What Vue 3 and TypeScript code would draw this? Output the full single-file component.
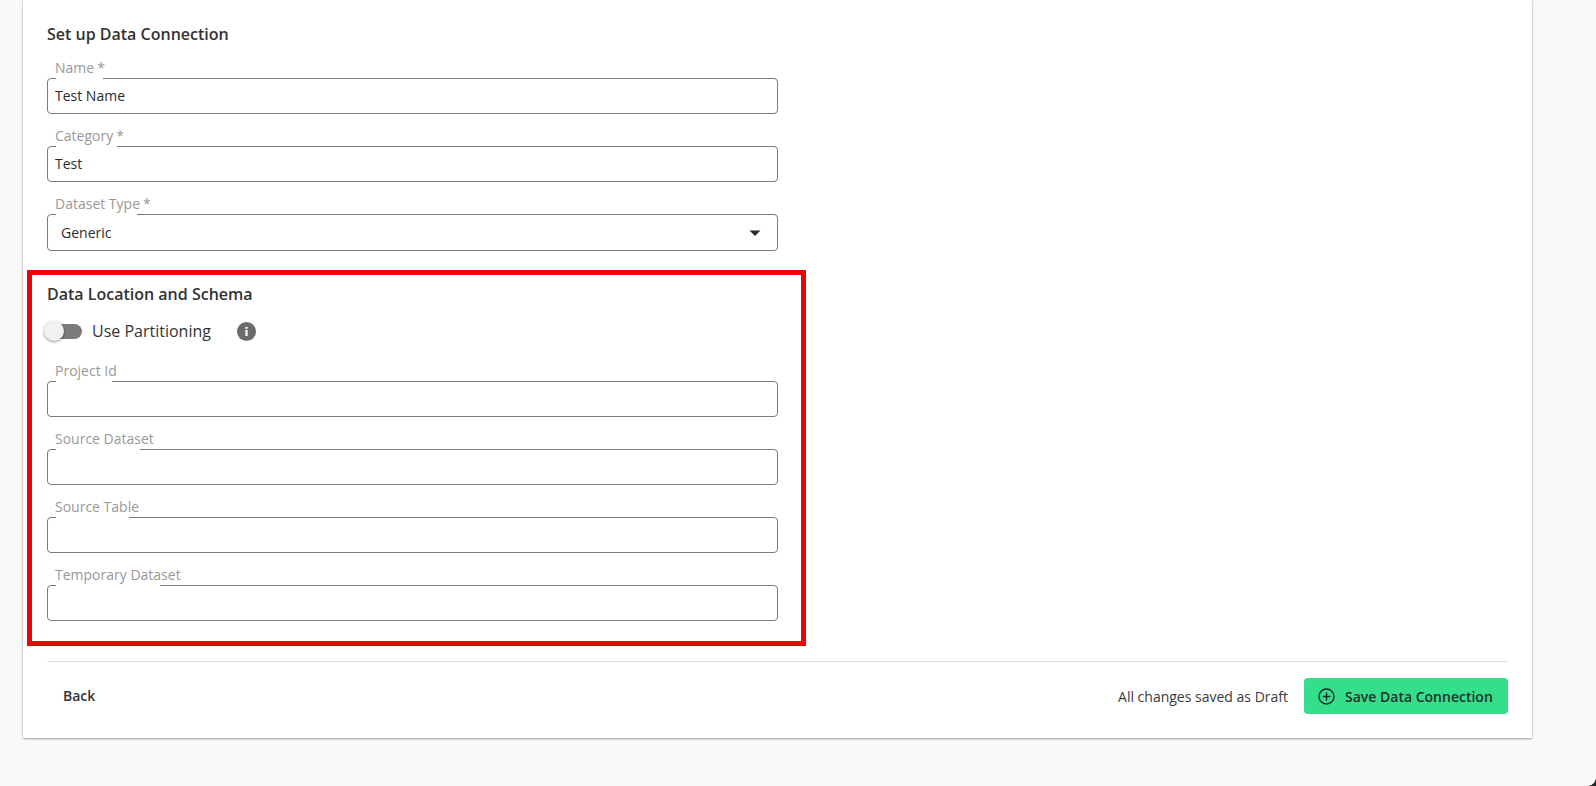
<script setup lang="ts">
interface Field { label: string; notch: number; required?: boolean; value?: string }
const topFields: Field[] = [
  { label: 'Name', notch: 47, required: true, value: 'Test Name' },
  { label: 'Category', notch: 61, required: true, value: 'Test' },
]
const locationFields: Field[] = [
  { label: 'Project Id', notch: 56 },
  { label: 'Source Dataset', notch: 84 },
  { label: 'Source Table', notch: 73 },
  { label: 'Temporary Dataset', notch: 104 },
]
</script>

<template>
  <div class="page">
    <main class="card">
      <section class="group">
        <h2 class="title">Set up Data Connection</h2>
        <div v-for="f in topFields" :key="f.label" class="field">
          <label class="label">{{ f.label }}<span class="req">*</span></label>
          <span class="notch" :style="{ width: f.notch + 'px' }"></span>
          <div class="control">{{ f.value }}</div>
        </div>
        <div class="field">
          <label class="label">Dataset Type<span class="req">*</span></label>
          <span class="notch" :style="{ width: '81px' }"></span>
          <div class="control select">
            <span>Generic</span>
            <svg class="caret" width="12" height="6" viewBox="0 0 12 6"><path d="M0.5 0.5h11L6 6z" fill="#2a2a2a" /></svg>
          </div>
        </div>
      </section>

      <section class="group highlighted">
        <h2 class="title">Data Location and Schema</h2>
        <div class="toggle-row">
          <span class="switch"><span class="knob"></span></span>
          <span class="toggle-label">Use Partitioning</span>
          <svg class="info" width="19" height="19" viewBox="0 0 19 19">
            <circle cx="9.5" cy="9.5" r="9.5" fill="#6b6b6b" />
            <rect x="8.4" y="8" width="2.2" height="6" fill="#fff" />
            <rect x="8.4" y="4.8" width="2.2" height="2" fill="#fff" />
          </svg>
        </div>
        <div v-for="f in locationFields" :key="f.label" class="field">
          <label class="label">{{ f.label }}</label>
          <span class="notch" :style="{ width: f.notch + 'px' }"></span>
          <div class="control"></div>
        </div>
      </section>

      <footer class="footer">
        <button class="back" type="button">Back</button>
        <div class="actions">
          <span class="status">All changes saved as Draft</span>
          <button class="save" type="button">
            <svg width="17" height="17" viewBox="0 0 17 17" fill="none" stroke="#1f2a25" stroke-width="1.4">
              <circle cx="8.5" cy="8.5" r="7.5" />
              <path d="M8.5 4.6v7.8M4.6 8.5h7.8" />
            </svg>
            <span>Save Data Connection</span>
          </button>
        </div>
      </footer>
    </main>
    <div class="corner"></div>
  </div>
</template>

<style>
html, body { margin: 0; background: #fafafa; }
</style>

<style scoped>
.page {
  position: relative;
  width: 1596px;
  height: 786px;
  overflow: hidden;
  background: #fafafa;
  font-family: "Open Sans", sans-serif;
  color: #2b2b2b;
}
.card {
  box-sizing: border-box;
  width: 1509px;
  height: 738px;
  margin-left: 23px;
  padding: 0 24px 0 4px;
  background: #fff;
  box-shadow: 0 1px 2px rgba(0, 0, 0, 0.35), 0 0 3px rgba(0, 0, 0, 0.08);
}
.group {
  box-sizing: border-box;
  width: 779px;
  height: 270px;
  padding: 24px 28px 0 20px;
}
.highlighted {
  height: 376px;
  padding: 9px 23px 0 15px;
  border: 5px solid #ea0606;
}
.title {
  margin: 0;
  font-size: 16px;
  line-height: 20px;
  font-weight: 600;
  color: #333;
}
.field {
  position: relative;
  margin-top: 32px;
}
.title + .field { margin-top: 34px; }
.label {
  position: absolute;
  left: 8px;
  bottom: 100%;
  font-size: 14px;
  line-height: 20px;
  color: #999;
}
.req { margin-left: 3px; }
.notch {
  position: absolute;
  left: 9px;
  top: 0;
  height: 1px;
  background: #fff;
}
.control {
  box-sizing: border-box;
  height: 36px;
  padding: 0 7px;
  border: 1px solid #7a7a7a;
  border-radius: 4px;
  font-size: 14px;
  line-height: 34px;
  color: #2b2b2b;
}
.select {
  height: 37px;
  padding: 0 16px 0 13px;
  line-height: 35px;
  display: flex;
  align-items: center;
  justify-content: space-between;
}
.caret { display: block; }
.toggle-row {
  display: flex;
  align-items: center;
  height: 28px;
  margin-top: 13px;
  margin-bottom: 36px;
}
.switch {
  position: relative;
  width: 35px;
  height: 15px;
  border-radius: 8px;
  background: #7b7b7b;
}
.knob {
  position: absolute;
  left: -3px;
  top: -3px;
  width: 20px;
  height: 20px;
  border-radius: 50%;
  background: #f1f1f1;
  box-shadow: 0 1px 3px rgba(0, 0, 0, 0.4);
}
.toggle-label {
  margin-left: 10px;
  font-size: 16px;
  color: #333;
}
.info { margin-left: 26px; }
.toggle-row + .field { margin-top: 0; }
.footer {
  display: flex;
  align-items: center;
  justify-content: space-between;
  margin: 15px 0 0 20px;
  padding-top: 16px;
  border-top: 1px solid #dedede;
}
.back {
  margin: -2px 0 0 16px;
  padding: 0;
  border: 0;
  background: none;
  font: 600 14px "Open Sans", sans-serif;
  color: #333;
}
.actions {
  display: flex;
  align-items: center;
  gap: 16px;
}
.status { font-size: 14px; color: #3a3a3a; }
.save {
  display: flex;
  align-items: center;
  gap: 10px;
  box-sizing: border-box;
  width: 204px;
  height: 36px;
  padding: 0 0 0 14px;
  border: 0;
  border-radius: 4px;
  background: #34de8a;
  font: 600 14px "Open Sans", sans-serif;
  color: #25302b;
}
.corner {
  position: absolute;
  right: 0;
  bottom: 0;
  width: 8px;
  height: 8px;
  background: radial-gradient(circle at 0 0, transparent 7.5px, #1c2626 8px);
}
</style>
